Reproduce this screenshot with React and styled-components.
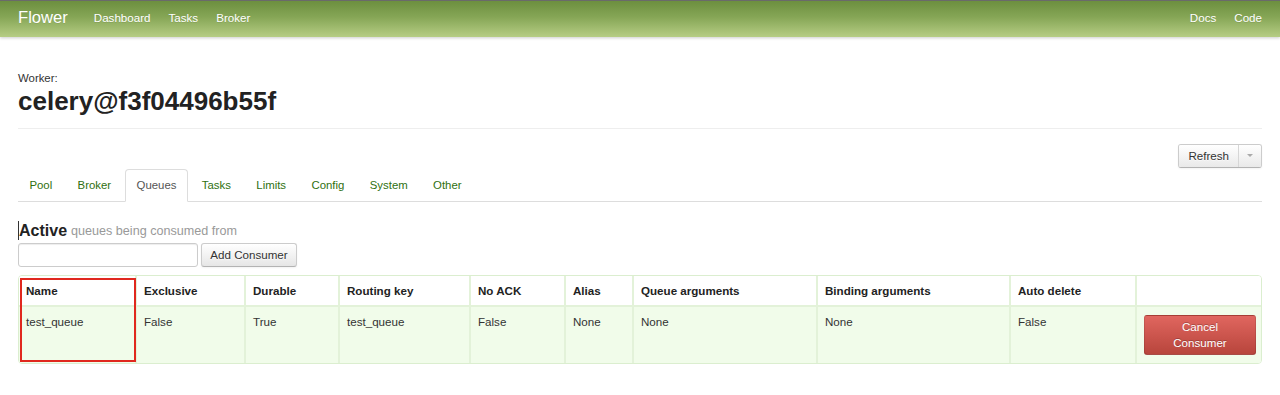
import styled, { createGlobalStyle } from "styled-components";

const GlobalStyle = createGlobalStyle`
  body {
    margin: 0;
    background: #fff;
    color: #333;
    font-family: "Liberation Sans", Helvetica, Arial, sans-serif;
    font-size: 11.6px;
    line-height: 16.6px;
  }
  * { box-sizing: border-box; }
`;

const columns = [
  { label: "Name", width: 117, value: "test_queue" },
  { label: "Exclusive", width: 109, value: "False" },
  { label: "Durable", width: 94, value: "True" },
  { label: "Routing key", width: 131, value: "test_queue" },
  { label: "No ACK", width: 95, value: "False" },
  { label: "Alias", width: 68, value: "None" },
  { label: "Queue arguments", width: 184, value: "None" },
  { label: "Binding arguments", width: 193, value: "None" },
  { label: "Auto delete", width: 126, value: "False" },
];

const tabs = ["Pool", "Broker", "Queues", "Tasks", "Limits", "Config", "System", "Other"];

const App = () => {
  return (
    <>
      <GlobalStyle />
      <Navbar>
        <Brand>Flower</Brand>
        <NavList>
          <NavLink>Dashboard</NavLink>
          <NavLink>Tasks</NavLink>
          <NavLink>Broker</NavLink>
        </NavList>
        <NavList $right>
          <NavLink>Docs</NavLink>
          <NavLink>Code</NavLink>
        </NavList>
      </Navbar>

      <Page>
        <Label>Worker:</Label>
        <Title>celery@f3f04496b55f</Title>
        <Rule />

        <Toolbar>
          <ButtonGroup>
            <GroupButton>Refresh</GroupButton>
            <GroupButton $caret>
              <Caret />
            </GroupButton>
          </ButtonGroup>
        </Toolbar>

        <Tabs>
          {tabs.map((t) => (
            <Tab key={t} $active={t === "Queues"}>
              {t}
            </Tab>
          ))}
        </Tabs>

        <Section>
          <Heading>
            <Cursor />
            Active <small>queues being consumed from</small>
          </Heading>
          <FormRow>
            <TextInput type="text" />
            <Button>Add Consumer</Button>
          </FormRow>

          <TableWrap>
            <Table>
              <colgroup>
                {columns.map((c) => (
                  <col key={c.label} style={{ width: c.width }} />
                ))}
                <col style={{ width: 127 }} />
              </colgroup>
              <thead>
                <tr>
                  {columns.map((c) => (
                    <Th key={c.label}>{c.label}</Th>
                  ))}
                  <Th />
                </tr>
              </thead>
              <tbody>
                <tr>
                  {columns.map((c) => (
                    <Td key={c.label}>{c.value}</Td>
                  ))}
                  <Td>
                    <DangerButton>
                      Cancel
                      <br />
                      Consumer
                    </DangerButton>
                  </Td>
                </tr>
              </tbody>
            </Table>
            <Highlight />
          </TableWrap>
        </Section>
      </Page>
    </>
  );
};

export default App;

const Navbar = styled.div`
  display: flex;
  align-items: center;
  height: 37px;
  padding: 0 9px 0 18px;
  border-top: 1px solid #6a6a6a;
  background: linear-gradient(to bottom, #6c8f3f 0%, #86a656 45%, #b6cd84 100%);
  box-shadow: 0 1px 3px rgba(0, 0, 0, 0.2);
`;

const Brand = styled.span`
  color: #fff;
  font-size: 16.6px;
  font-weight: 200;
  margin-right: 17px;
  margin-top: -2px;
  text-shadow: 0 1px 0 rgba(0, 0, 0, 0.08);
`;

const NavList = styled.nav`
  display: flex;
  margin-left: ${(p) => (p.$right ? "auto" : "0")};
  margin-top: -2px;
`;

const NavLink = styled.a`
  color: #fff;
  padding: 0 9px;
  font-size: 11.6px;
  text-shadow: 0 1px 0 rgba(0, 0, 0, 0.1);
  cursor: pointer;
`;

const Page = styled.div`
  padding: 33px 18px 0;
`;

const Label = styled.div`
  font-size: 11.4px;
  line-height: 16.6px;
`;

const Title = styled.h2`
  margin: -2px 0 0;
  font-size: 26px;
  line-height: 33px;
  font-weight: bold;
  color: #222;
`;

const Rule = styled.hr`
  margin: 10px 0 0;
  border: 0;
  border-top: 1px solid #eee;
`;

const Toolbar = styled.div`
  display: flex;
  justify-content: flex-end;
  margin-top: 15px;
`;

const ButtonGroup = styled.div`
  display: flex;
  height: 24px;
  border: 1px solid #ccc;
  border-bottom-color: #b3b3b3;
  border-radius: 3px;
  box-shadow: inset 0 1px 0 rgba(255, 255, 255, 0.2), 0 1px 2px rgba(0, 0, 0, 0.05);
  overflow: hidden;
`;

const GroupButton = styled.button`
  display: flex;
  align-items: center;
  justify-content: center;
  padding: 0 ${(p) => (p.$caret ? "8px" : "9px")};
  width: ${(p) => (p.$caret ? "23px" : "auto")};
  border: 0;
  border-left: ${(p) => (p.$caret ? "1px solid #d6d6d6" : "0")};
  background: linear-gradient(to bottom, #ffffff, #e9e9e9);
  color: #333;
  font-family: inherit;
  font-size: 11.6px;
  text-shadow: 0 1px 1px rgba(255, 255, 255, 0.75);
`;

const Caret = styled.span`
  width: 0;
  height: 0;
  border-left: 3px solid transparent;
  border-right: 3px solid transparent;
  border-top: 3px solid #aaa;
`;

const Tabs = styled.ul`
  display: flex;
  margin: 1px 0 0;
  padding: 0;
  list-style: none;
  border-bottom: 1px solid #ddd;
`;

const Tab = styled.li`
  padding: 7.5px 10.4px 7px;
  margin-right: 2.6px;
  margin-bottom: -1px;
  line-height: 16.6px;
  font-size: 11.4px;
  color: ${(p) => (p.$active ? "#555" : "#2f7010")};
  background: ${(p) => (p.$active ? "#fff" : "transparent")};
  border: 1px solid ${(p) => (p.$active ? "#ddd" : "transparent")};
  border-bottom-color: ${(p) => (p.$active ? "#fff" : "transparent")};
  border-radius: 4px 4px 0 0;
  cursor: pointer;
`;

const Section = styled.div`
  padding-top: 19px;
`;

const Heading = styled.h4`
  display: flex;
  align-items: center;
  margin: 0;
  font-size: 16px;
  line-height: 20px;
  font-weight: bold;
  color: #222;

  small {
    margin-left: 4px;
    font-size: 12.6px;
    font-weight: normal;
    color: #999;
  }
`;

const Cursor = styled.span`
  display: inline-block;
  width: 1px;
  height: 19px;
  margin-right: 0;
  background: #333;
`;

const FormRow = styled.div`
  display: flex;
  gap: 3px;
  margin-top: 2px;
`;

const TextInput = styled.input`
  width: 180px;
  height: 24px;
  margin: 0;
  padding: 3px 5px;
  border: 1px solid #ccc;
  border-radius: 3px;
  box-shadow: inset 0 1px 1px rgba(0, 0, 0, 0.075);
  font-family: inherit;
  font-size: 11.6px;

  &:focus {
    outline: none;
  }
`;

const Button = styled.button`
  height: 24px;
  width: 96px;
  padding: 0;
  border: 1px solid #ccc;
  border-bottom-color: #b3b3b3;
  border-radius: 3px;
  background: linear-gradient(to bottom, #ffffff, #e6e6e6);
  color: #333;
  font-family: inherit;
  font-size: 11.6px;
  text-shadow: 0 1px 1px rgba(255, 255, 255, 0.75);
  box-shadow: inset 0 1px 0 rgba(255, 255, 255, 0.2), 0 1px 2px rgba(0, 0, 0, 0.05);
`;

const TableWrap = styled.div`
  position: relative;
  margin-top: 8px;
  border: 1px solid #dbeecf;
  border-radius: 4px;
  overflow: hidden;
`;

const Table = styled.table`
  width: 100%;
  table-layout: fixed;
  border-collapse: collapse;
`;

const Th = styled.th`
  padding: 7px 7px 6px;
  text-align: left;
  font-size: 11.6px;
  line-height: 16.6px;
  font-weight: bold;
  color: #222;
  background: #fff;
  border-left: 2px solid #e3f2d9;
  border-bottom: 2px solid #e3f2d9;

  &:first-child {
    border-left: 0;
  }
`;

const Td = styled.td`
  padding: 7px 7px 8px;
  vertical-align: top;
  font-size: 11.6px;
  line-height: 16.6px;
  background: #f1fcea;
  border-left: 2px solid #e3f2d9;

  &:first-child {
    border-left: 0;
  }
`;

const DangerButton = styled.button`
  display: block;
  width: 100%;
  height: 40px;
  margin-top: 1px;
  padding: 0;
  border: 1px solid rgba(0, 0, 0, 0.1);
  border-bottom-color: rgba(0, 0, 0, 0.25);
  border-radius: 3px;
  background: linear-gradient(to bottom, #e0665f, #b8453c);
  color: #fff;
  font-family: inherit;
  font-size: 11.6px;
  line-height: 16px;
  text-shadow: 0 -1px 0 rgba(0, 0, 0, 0.25);
`;

const Highlight = styled.div`
  position: absolute;
  left: 1px;
  top: 2px;
  width: 116px;
  height: 84px;
  border: 2px solid #e0281e;
  pointer-events: none;
`;
